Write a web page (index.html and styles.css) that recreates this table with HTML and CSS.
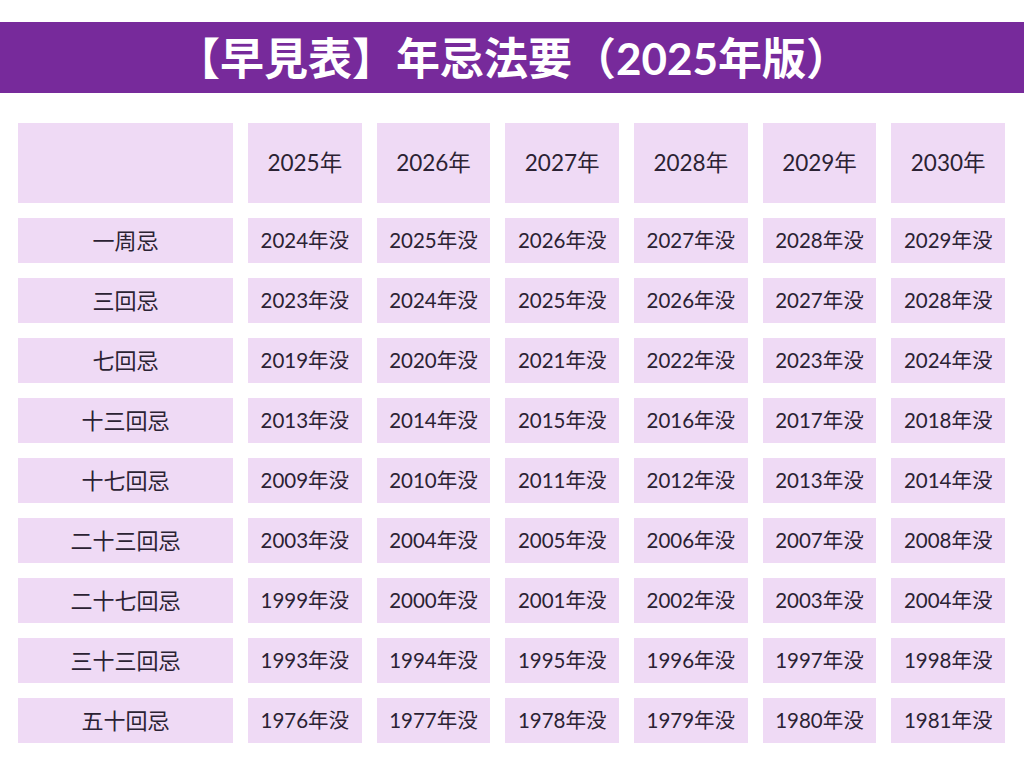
FILE: index.html
```html
<!DOCTYPE html>
<html lang="ja">
<head>
<meta charset="utf-8">
<title>年忌法要 早見表</title>
<link rel="stylesheet" href="styles.css">
</head>
<body>
<header class="banner"><h1 class="title">【早見表】年忌法要（2025年版）</h1></header>
<main class="table">
  <div class="cell head blank"></div>
  <div class="cell head">2025年</div>
  <div class="cell head">2026年</div>
  <div class="cell head">2027年</div>
  <div class="cell head">2028年</div>
  <div class="cell head">2029年</div>
  <div class="cell head">2030年</div>

  <div class="cell label">一周忌</div>
  <div class="cell">2024年没</div><div class="cell">2025年没</div><div class="cell">2026年没</div><div class="cell">2027年没</div><div class="cell">2028年没</div><div class="cell">2029年没</div>

  <div class="cell label">三回忌</div>
  <div class="cell">2023年没</div><div class="cell">2024年没</div><div class="cell">2025年没</div><div class="cell">2026年没</div><div class="cell">2027年没</div><div class="cell">2028年没</div>

  <div class="cell label">七回忌</div>
  <div class="cell">2019年没</div><div class="cell">2020年没</div><div class="cell">2021年没</div><div class="cell">2022年没</div><div class="cell">2023年没</div><div class="cell">2024年没</div>

  <div class="cell label">十三回忌</div>
  <div class="cell">2013年没</div><div class="cell">2014年没</div><div class="cell">2015年没</div><div class="cell">2016年没</div><div class="cell">2017年没</div><div class="cell">2018年没</div>

  <div class="cell label">十七回忌</div>
  <div class="cell">2009年没</div><div class="cell">2010年没</div><div class="cell">2011年没</div><div class="cell">2012年没</div><div class="cell">2013年没</div><div class="cell">2014年没</div>

  <div class="cell label">二十三回忌</div>
  <div class="cell">2003年没</div><div class="cell">2004年没</div><div class="cell">2005年没</div><div class="cell">2006年没</div><div class="cell">2007年没</div><div class="cell">2008年没</div>

  <div class="cell label">二十七回忌</div>
  <div class="cell">1999年没</div><div class="cell">2000年没</div><div class="cell">2001年没</div><div class="cell">2002年没</div><div class="cell">2003年没</div><div class="cell">2004年没</div>

  <div class="cell label">三十三回忌</div>
  <div class="cell">1993年没</div><div class="cell">1994年没</div><div class="cell">1995年没</div><div class="cell">1996年没</div><div class="cell">1997年没</div><div class="cell">1998年没</div>

  <div class="cell label">五十回忌</div>
  <div class="cell">1976年没</div><div class="cell">1977年没</div><div class="cell">1978年没</div><div class="cell">1979年没</div><div class="cell">1980年没</div><div class="cell">1981年没</div>
</main>
</body>
</html>
```
FILE: styles.css
```css
html, body {
  margin: 0;
  padding: 0;
  background: #ffffff;
}
body {
  width: 1024px;
  height: 768px;
  overflow: hidden;
  font-family: Lato, "Noto Sans CJK JP", sans-serif;
  color: #2b2233;
}
.banner {
  margin-top: 22px;
  height: 71px;
  background: #772a9b;
  display: flex;
  align-items: center;
  justify-content: center;
}
.title {
  margin: 0;
  color: #ffffff;
  font-family: Lato, "Noto Sans CJK JP", sans-serif;
  font-weight: 700;
  font-size: 44px;
  line-height: 1;
  letter-spacing: 0;
  padding-left: 2px;
}
.table {
  margin: 30px 0 0 18px;
  width: 987px;
  display: grid;
  grid-template-columns: 215px repeat(6, 1fr);
  grid-template-rows: 80px repeat(9, 45px);
  column-gap: 15px;
  row-gap: 15px;
}
.cell {
  background: #efdaf5;
  display: flex;
  align-items: center;
  justify-content: center;
  font-size: 20.5px;
  line-height: 1;
}
.head {
  font-size: 22.5px;
}
.label {
  font-size: 22px;
}
```
